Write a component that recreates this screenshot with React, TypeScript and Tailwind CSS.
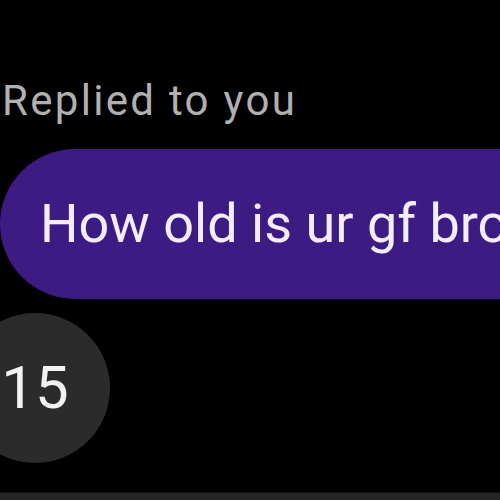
import React from 'react'

const App: React.FC = () => {
  return (
    <div className="w-[500px] h-[500px] bg-black overflow-hidden flex flex-col font-['Roboto',sans-serif]">
      {/* Reply label */}
      <div className="mt-[80px] pl-[2px] text-[42px] leading-none tracking-[2.3px] text-[#b0b0b0] whitespace-nowrap">
        Replied to you
      </div>

      {/* Quoted message */}
      <div className="mt-[27px] h-[150px] w-[520px] shrink-0 bg-[#3c1b82] rounded-l-[75px] flex items-center pl-[40px] overflow-hidden">
        <span className="text-[54px] leading-none text-[#f4ecff] whitespace-nowrap">How old is ur gf bro</span>
      </div>

      {/* Reply bubble */}
      <div className="mt-[14px] -ml-[40px] w-[150px] h-[150px] shrink-0 rounded-full bg-[#2b2b2b] flex items-center justify-center">
        <span className="text-[60px] leading-none text-[#f2f2f2]">15</span>
      </div>

      <div className="flex-1" />

      {/* Composer edge */}
      <div className="h-[8px] shrink-0 bg-[#262626] border-t border-[#161616]" />
    </div>
  )
}

export default App
